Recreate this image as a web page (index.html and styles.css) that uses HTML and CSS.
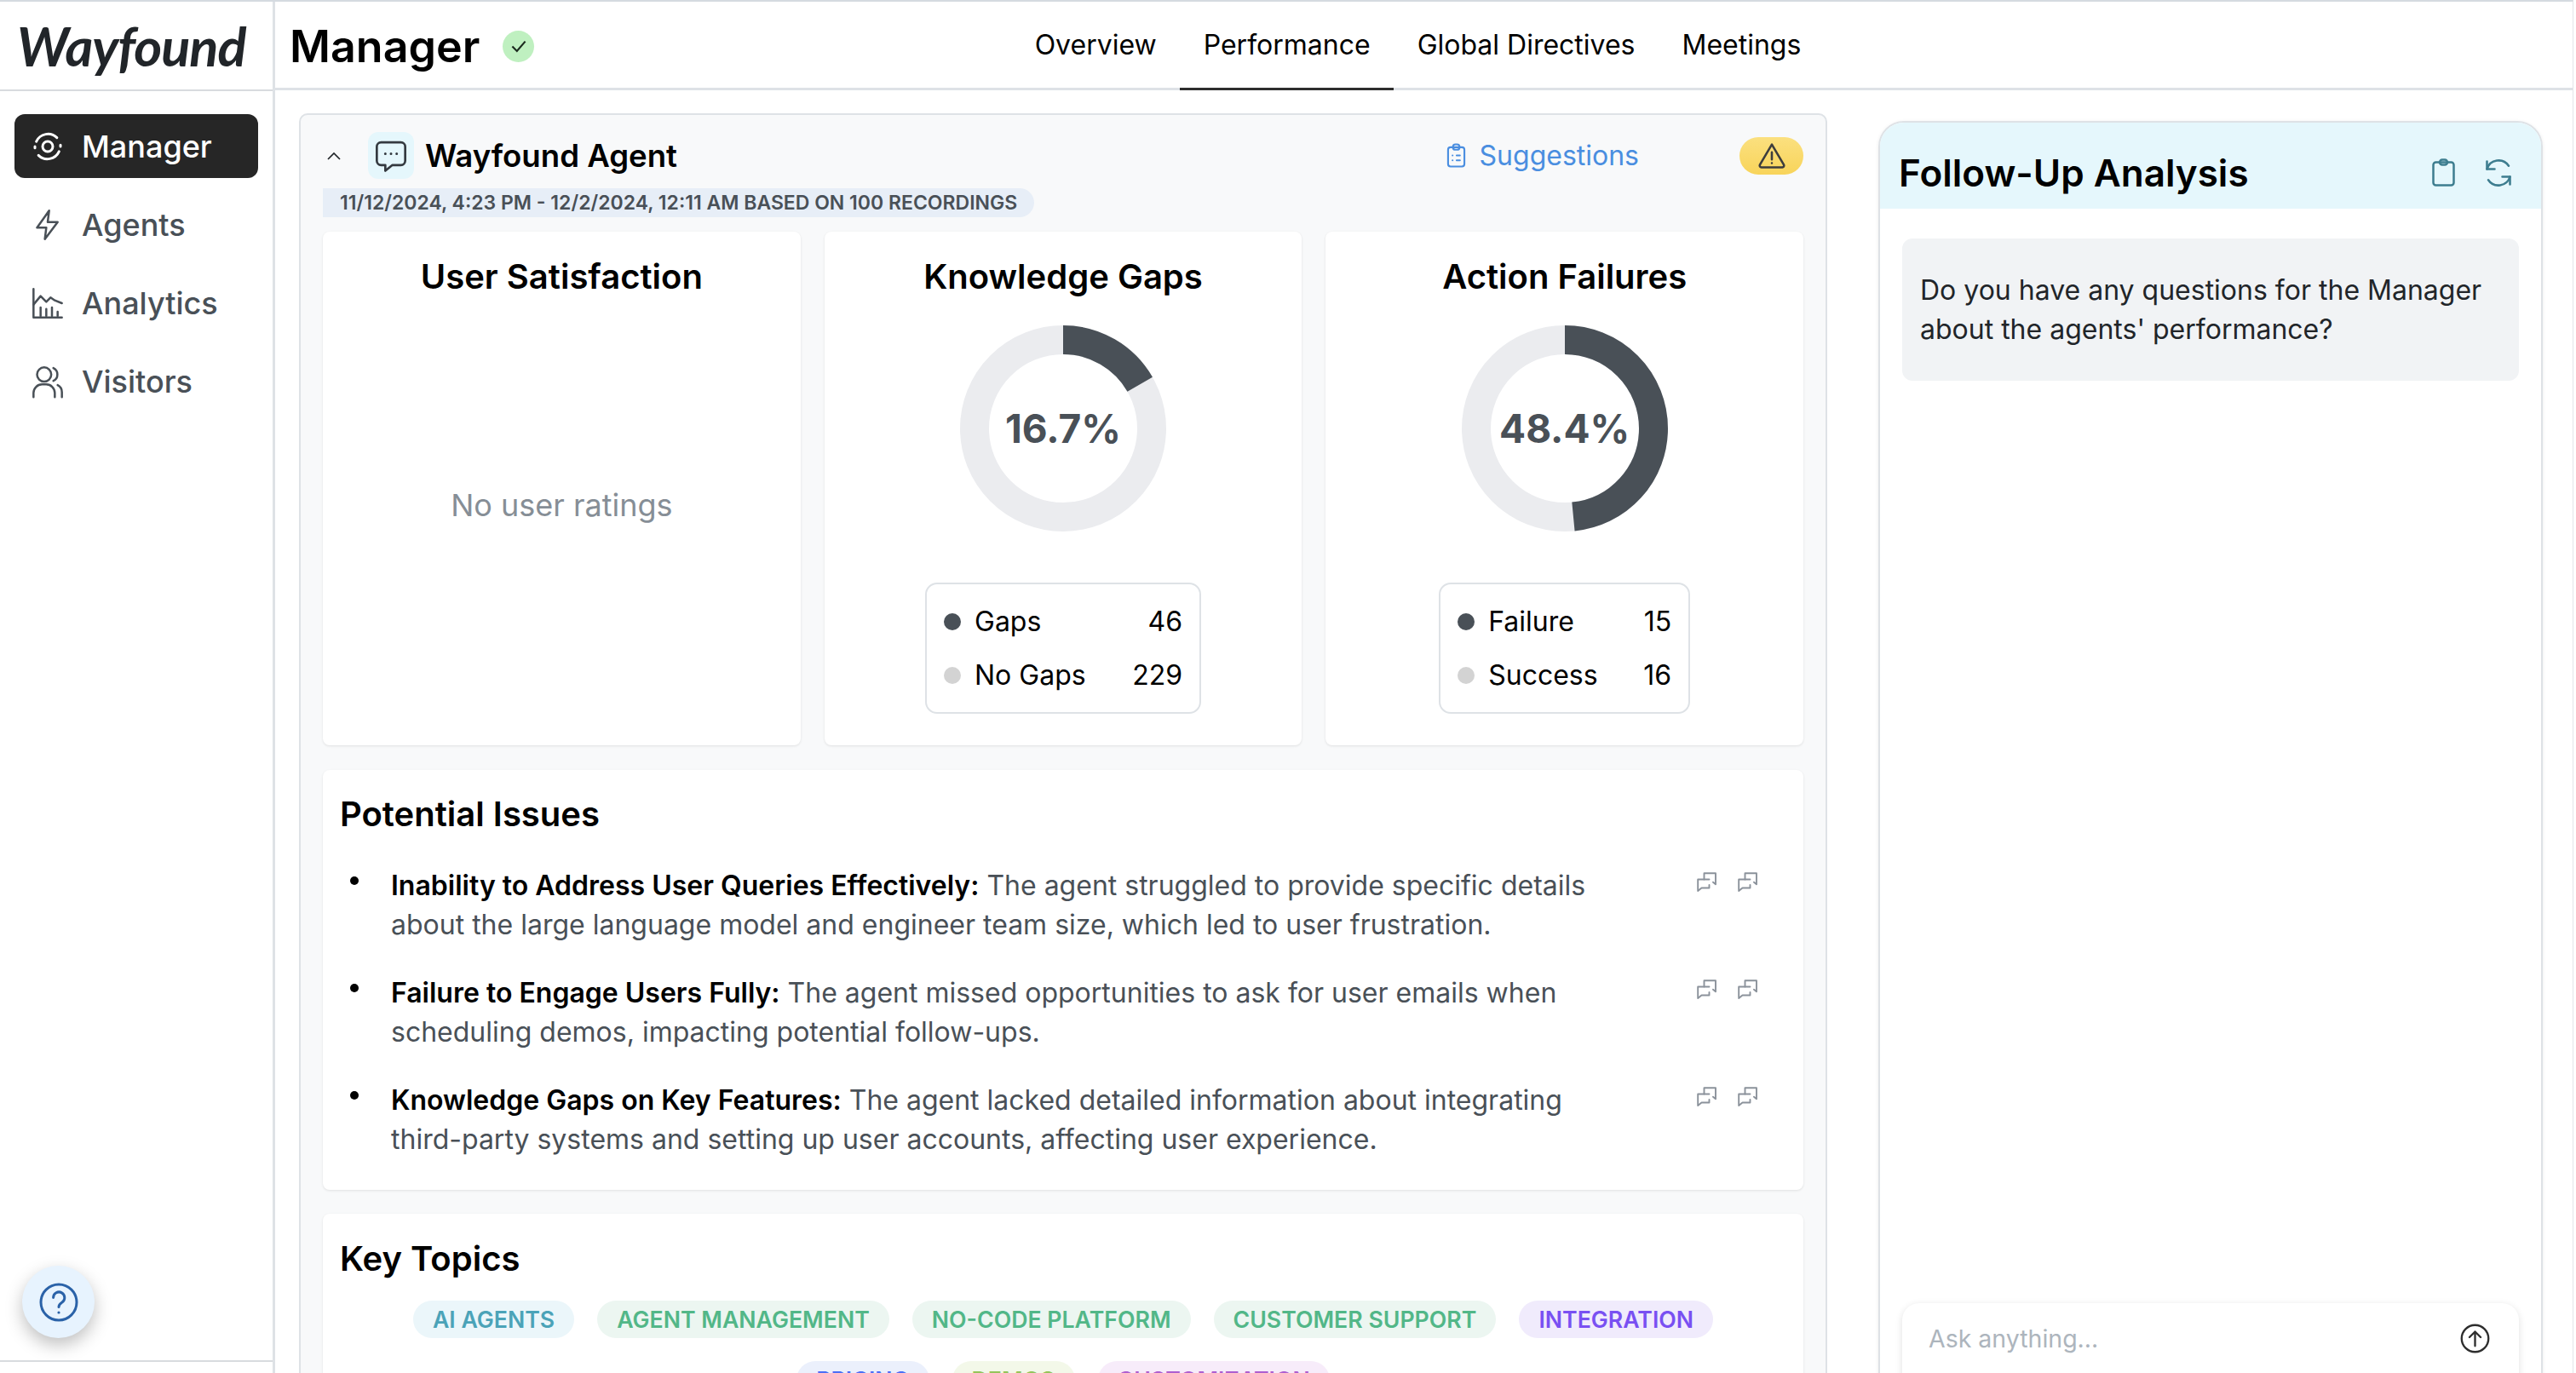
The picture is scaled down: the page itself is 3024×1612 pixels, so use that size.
FILE: index.html
```html
<!DOCTYPE html>
<html lang="en">
<head>
	<meta charset="UTF-8">
	<title>Manager - Wayfound</title>
	<link rel="stylesheet" href="styles.css">
</head>
<body>
	<div class="page">
		<aside class="sidebar">
			<div class="logo"><span class="logo-text">Wayfound</span></div>
			<nav class="side-nav">
				<a class="side-link active">
					<svg class="side-icon" viewBox="0 0 24 24"><circle cx="12" cy="12" r="3.600"/><path d="M4 8.500A9 9 0 0 1 18.500 5.800M20 15.500A9 9 0 0 1 5.500 18.200"/><path d="M3 13v-1M21 11v1"/></svg>
					Manager
				</a>
				<a class="side-link">
					<svg class="side-icon" viewBox="0 0 24 24"><path d="M13 2 4.500 14H11l-1 8 9-12h-7z"/></svg>
					Agents
				</a>
				<a class="side-link">
					<svg class="side-icon" viewBox="0 0 24 24"><path d="M2 2v20h20"/><path d="M2 13l5-6 4 4 3-3 3 2 5 2"/><path d="M7 21v-6M11 21v-5M15 21v-6M19 21v-3"/></svg>
					Analytics
				</a>
				<a class="side-link">
					<svg class="side-icon" viewBox="0 0 24 24"><circle cx="9.500" cy="7" r="5"/><path d="M2 23v-3a6 6 0 0 1 6-6h3a6 6 0 0 1 6 6v3"/><path d="M16 2.500a5 5 0 0 1 0 9M19 14.500a5.500 5.500 0 0 1 3 5V23"/></svg>
					Visitors
				</a>
			</nav>
			<button class="help-btn">
				<svg viewBox="0 0 24 24"><circle cx="12" cy="12" r="10.500"/><path d="M8.800 9.200a3.300 3.300 0 1 1 5 2.900c-1.100.7-1.800 1.300-1.800 2.600"/><circle class="dot" cx="12" cy="18" r=".8"/></svg>
			</button>
			<div class="side-foot"></div>
		</aside>

		<div class="main">
			<header class="topbar">
				<div class="page-title">
					<h1>Manager</h1>
					<span class="status-ok"><svg viewBox="0 0 24 24"><path d="M5 12.500l5 5L19 7"/></svg></span>
				</div>
				<div class="tabs">
					<a class="tab">Overview</a>
					<a class="tab active">Performance</a>
					<a class="tab">Global Directives</a>
					<a class="tab">Meetings</a>
				</div>
			</header>

			<div class="content">
				<section class="agent-panel">
					<div class="agent-head">
						<svg class="chevron" viewBox="0 0 24 24"><path d="M5 16l7-7 7 7"/></svg>
						<span class="agent-icon">
							<svg viewBox="0 0 24 24"><path d="M5 2.500h14a3 3 0 0 1 3 3v10a3 3 0 0 1-3 3h-6l-5 4v-4H5a3 3 0 0 1-3-3v-10a3 3 0 0 1 3-3z"/><path class="dots" d="M8 10.500h.01M12 10.500h.01M16 10.500h.01"/></svg>
						</span>
						<h2 class="agent-name">Wayfound Agent</h2>
						<a class="suggestions">
							<svg viewBox="0 0 24 30"><rect x="2" y="5" width="20" height="23.500" rx="3"/><rect x="8" y="1.500" width="8" height="6.500" rx="3"/><path d="M7.500 15h.01M7.500 21h.01M12.500 15h4M12.500 21h4"/></svg>
							Suggestions
						</a>
						<span class="warn-pill">
							<svg viewBox="0 0 24 24"><path d="M12 2.500 2 19.500a1.500 1.500 0 0 0 1.300 2h17.400a1.500 1.500 0 0 0 1.300-2z"/><path d="M12 9v6M12 18v.01"/></svg>
						</span>
					</div>
					<div class="date-pill">11/12/2024, 4:23 PM - 12/2/2024, 12:11 AM based on 100 recordings</div>

					<div class="stat-row">
						<div class="card stat">
							<h3>User Satisfaction</h3>
							<p class="no-data">No user ratings</p>
						</div>
						<div class="card stat">
							<h3>Knowledge Gaps</h3>
							<div class="donut">
								<svg viewBox="0 0 242 242"><circle class="track" cx="121" cy="121" r="104"/><circle class="value" cx="121" cy="121" r="104" stroke-dasharray="109.100 653.500" transform="rotate(-90 121 121)"/></svg>
								<span class="donut-label">16.7%</span>
							</div>
							<div class="legend legend-gaps">
								<div class="legend-row"><i class="dot-dark"></i><span>Gaps</span><b>46</b></div>
								<div class="legend-row"><i class="dot-light"></i><span>No Gaps</span><b>229</b></div>
							</div>
						</div>
						<div class="card stat">
							<h3>Action Failures</h3>
							<div class="donut">
								<svg viewBox="0 0 242 242"><circle class="track" cx="121" cy="121" r="104"/><circle class="value" cx="121" cy="121" r="104" stroke-dasharray="316.300 653.500" transform="rotate(-90 121 121)"/></svg>
								<span class="donut-label">48.4%</span>
							</div>
							<div class="legend legend-actions">
								<div class="legend-row"><i class="dot-dark"></i><span>Failure</span><b>15</b></div>
								<div class="legend-row"><i class="dot-light"></i><span>Success</span><b>16</b></div>
							</div>
						</div>
					</div>

					<div class="card issues">
						<h3>Potential Issues</h3>
						<ul class="issue-list">
							<li>
								<p><strong>Inability to Address User Queries Effectively:</strong> The agent struggled to provide specific details about the large language model and engineer team size, which led to user frustration.</p>
								<span class="issue-actions">
									<svg viewBox="0 0 23 23"><path d="M8.500 8.500V1.200H22v13l-3-2.500"/><path d="M14.500 8.500H1.200V22l4.300-3.500h9v-3.500"/></svg>
									<svg viewBox="0 0 23 23"><path d="M8.500 8.500V1.200H22v13l-3-2.500"/><path d="M14.500 8.500H1.200V22l4.300-3.500h9v-3.500"/></svg>
								</span>
							</li>
							<li>
								<p><strong>Failure to Engage Users Fully:</strong> The agent missed opportunities to ask for user emails when scheduling demos, impacting potential follow-ups.</p>
								<span class="issue-actions">
									<svg viewBox="0 0 23 23"><path d="M8.500 8.500V1.200H22v13l-3-2.500"/><path d="M14.500 8.500H1.200V22l4.300-3.500h9v-3.500"/></svg>
									<svg viewBox="0 0 23 23"><path d="M8.500 8.500V1.200H22v13l-3-2.500"/><path d="M14.500 8.500H1.200V22l4.300-3.500h9v-3.500"/></svg>
								</span>
							</li>
							<li>
								<p><strong>Knowledge Gaps on Key Features:</strong> The agent lacked detailed information about integrating third-party systems and setting up user accounts, affecting user experience.</p>
								<span class="issue-actions">
									<svg viewBox="0 0 23 23"><path d="M8.500 8.500V1.200H22v13l-3-2.500"/><path d="M14.500 8.500H1.200V22l4.300-3.500h9v-3.500"/></svg>
									<svg viewBox="0 0 23 23"><path d="M8.500 8.500V1.200H22v13l-3-2.500"/><path d="M14.500 8.500H1.200V22l4.300-3.500h9v-3.500"/></svg>
								</span>
							</li>
						</ul>
					</div>

					<div class="card topics">
						<h3>Key Topics</h3>
						<div class="topic-list">
							<span class="topic teal">AI Agents</span>
							<span class="topic green">Agent Management</span>
							<span class="topic green">No-Code Platform</span>
							<span class="topic green">Customer Support</span>
							<span class="topic violet">Integration</span>
							<span class="topic blue">Pricing</span>
							<span class="topic lime">Demos</span>
							<span class="topic pink">Customization</span>
						</div>
					</div>
				</section>

				<section class="followup">
					<div class="followup-head">
						<h2>Follow-Up Analysis</h2>
						<svg class="head-icon clip" viewBox="0 0 27 33"><rect x="1.500" y="4.500" width="24" height="27" rx="3"/><rect x="9" y="1.500" width="9" height="6" rx="3"/></svg>
						<svg class="head-icon refresh" viewBox="0 0 24 24"><path d="M3 9a9.500 9.500 0 0 1 17-2.500M21 15a9.500 9.500 0 0 1-17 2.500"/><path d="M3 3v6h6M21 21v-6h-6"/></svg>
					</div>
					<div class="followup-body">
						<div class="message">Do you have any questions for the Manager about the agents' performance?</div>
						<div class="ask-box">
							<span class="ask-hint">Ask anything...</span>
							<svg class="send" viewBox="0 0 24 24"><circle cx="12" cy="12" r="10.800"/><path d="M12 18V6.500M7.500 11 12 6.500l4.500 4.500"/></svg>
						</div>
					</div>
				</section>
			</div>
		</div>
	</div>
</body>
</html>
```

FILE: styles.css
```css
*{
	margin: 0;
	padding: 0;
	box-sizing: border-box;
}
html,body{
	height: 1612px;
	overflow: hidden;
	background-color: #fff;
}
body{
	font-family: "Inter", "Liberation Sans", sans-serif;
	color: #000;
}
svg{
	fill: none;
	display: block;
}
.page{
	display: flex;
	width: 3021px;
	height: 1612px;
	border-right: 1px solid #e3e5e8;
	border-top: 2px solid #d5dae0;
	overflow: hidden;
}

/* sidebar */
.sidebar{
	width: 323px;
	flex: none;
	display: flex;
	flex-direction: column;
	border-right: 3px solid #dee2e6;
}
.logo{
	height: 105px;
	flex: none;
	border-bottom: 2px solid #d8dbdf;
	padding-left: 20px;
	display: flex;
	align-items: center;
}
.logo-text{
	font-family: "Lato", sans-serif;
	font-style: italic;
	font-weight: 700;
	font-size: 63px;
	letter-spacing: -1px;
	color: #212529;
}
.side-nav{
	display: flex;
	flex-direction: column;
	gap: 17px;
	padding: 27px 17px 0;
}
.side-link{
	height: 75px;
	display: flex;
	align-items: center;
	gap: 20px;
	padding-left: 19px;
	border-radius: 12px;
	font-size: 36px;
	font-weight: 500;
	color: #495057;
}
.side-link.active{
	background-color: #262626;
	color: #fff;
}
.side-icon{
	width: 40px;
	height: 40px;
	stroke: #495057;
	stroke-width: 1.500;
	stroke-linecap: round;
	stroke-linejoin: round;
	flex: none;
}
.active .side-icon{
	stroke: #fff;
	stroke-width: 1.800;
}
.help-btn{
	width: 85px;
	height: 85px;
	margin: auto 0 26px 26px;
	flex: none;
	border: 0;
	border-radius: 50%;
	background-color: #e7f3fe;
	box-shadow: 0 8px 20px rgba(0,0,0,.25);
	display: flex;
	align-items: center;
	justify-content: center;
}
.help-btn svg{
	width: 48px;
	height: 48px;
	stroke: #2a62a8;
	stroke-width: 1.500;
	stroke-linecap: round;
}
.help-btn .dot{
	fill: #2a62a8;
	stroke: none;
}
.side-foot{
	height: 15px;
	flex: none;
	border-top: 2px solid #d8dbdf;
}

/* top bar */
.main{
	flex: 1;
	min-width: 0;
	display: flex;
	flex-direction: column;
}
.topbar{
	height: 104px;
	flex: none;
	display: grid;
	grid-template-columns: 1fr auto 1fr;
	padding-right: 14px;
	border-bottom: 3px solid #dee2e6;
}
.page-title{
	display: flex;
	align-items: center;
	gap: 27px;
	padding-left: 17px;
}
.page-title h1{
	font-size: 52px;
	font-weight: 600;
}
.status-ok{
	width: 37px;
	height: 37px;
	border-radius: 50%;
	background-color: #bff0c0;
	display: flex;
	align-items: center;
	justify-content: center;
}
.status-ok svg{
	width: 26px;
	height: 26px;
	stroke: #1b2a1e;
	stroke-width: 2;
}
.tabs{
	display: flex;
}
.tab{
	height: 104px;
	padding: 0 27.500px 4px;
	display: flex;
	align-items: center;
	font-size: 32px;
	color: #000;
}
.tab.active{
	padding-bottom: 1px;
	border-bottom: 3px solid #2e2e2e;
}

/* page content */
.content{
	flex: 1;
	min-height: 0;
	display: flex;
	gap: 60px;
	padding: 27px 36px 0 28px;
	overflow: hidden;
	align-items: flex-start;
}
.agent-panel{
	width: 1794px;
	flex: none;
	background-color: #f8f9fa;
	border: 2px solid #dee2e6;
	border-radius: 10px;
	padding: 20px 26px 40px;
}
.agent-head{
	display: flex;
	align-items: center;
	height: 55px;
}
.chevron{
	width: 24px;
	height: 24px;
	stroke: #212529;
	stroke-width: 1.700;
	margin-left: 1px;
	margin-right: 28px;
}
.agent-icon{
	width: 54px;
	height: 55px;
	border-radius: 12px;
	background-color: #e5f7fc;
	display: flex;
	align-items: center;
	justify-content: center;
}
.agent-icon svg{
	width: 40px;
	height: 40px;
	stroke: #343a40;
	stroke-width: 1.600;
	stroke-linejoin: round;
}
.agent-icon .dots{
	stroke-linecap: round;
	stroke-width: 1.800;
}
.agent-name{
	font-size: 36.600px;
	font-weight: 600;
	margin-left: 13px;
}
.suggestions{
	margin-left: auto;
	display: flex;
	align-items: center;
	gap: 16px;
	font-size: 32px;
	color: #4a8ee0;
}
.suggestions svg{
	width: 23px;
	height: 29px;
	stroke: #4a8ee0;
	stroke-width: 2.200;
	stroke-linecap: round;
}
.warn-pill{
	width: 75px;
	height: 44px;
	margin-left: 118px;
	border-radius: 22px;
	background: linear-gradient(#fbe07f,#f8d45a);
	display: flex;
	align-items: center;
	justify-content: center;
}
.warn-pill svg{
	width: 34px;
	height: 34px;
	stroke: #3d3d3d;
	stroke-width: 1.800;
	stroke-linejoin: round;
	stroke-linecap: round;
}
.date-pill{
	display: inline-block;
	height: 34px;
	line-height: 34px;
	margin-top: 11px;
	padding: 0 20px;
	background-color: #e7eef7;
	border-radius: 0 17px 17px 0;
	font-size: 23px;
	font-weight: 600;
	text-transform: uppercase;
	color: #495057;
	vertical-align: top;
}
.stat-row{
	display: flex;
	gap: 28px;
	margin-top: 17px;
}
.card{
	background-color: #fff;
	border-radius: 8px;
	box-shadow: 0 1px 3px rgba(0,0,0,.1);
}
.stat{
	flex: 1;
	height: 603px;
	padding-top: 29px;
	display: flex;
	flex-direction: column;
	align-items: center;
}
.stat h3{
	font-size: 40px;
	line-height: 48px;
	font-weight: 600;
}
.no-data{
	margin-top: 222px;
	font-size: 36px;
	color: #868e96;
}
.donut{
	width: 242px;
	height: 242px;
	margin-top: 33px;
	position: relative;
	flex: none;
}
.donut circle{
	stroke-width: 34;
}
.donut .track{
	stroke: #ebecef;
}
.donut .value{
	stroke: #495057;
}
.donut-label{
	position: absolute;
	left: 0;
	right: 0;
	top: 0;
	bottom: 0;
	display: flex;
	align-items: center;
	justify-content: center;
	font-size: 46px;
	font-weight: 700;
	color: #495057;
}
.legend{
	margin-top: 60px;
	height: 154px;
	padding: 12px 20px;
	border: 2px solid #dee2e6;
	border-radius: 14px;
	display: flex;
	flex-direction: column;
	justify-content: center;
	gap: 15px;
}
.legend-gaps{
	width: 324px;
}
.legend-actions{
	width: 295px;
}
.legend-row{
	display: flex;
	align-items: center;
	height: 48px;
	font-size: 32px;
	color: #000;
}
.legend-row i{
	width: 20px;
	height: 20px;
	border-radius: 50%;
	margin-right: 16px;
	flex: none;
}
.dot-dark{
	background-color: #495057;
}
.dot-light{
	background-color: #d3d3d3;
}
.legend-row b{
	margin-left: auto;
	font-weight: 400;
}

/* issues */
.issues{
	margin-top: 29px;
	height: 493px;
	padding: 26px 20px 0;
}
.issues h3,.topics h3{
	font-size: 40px;
	line-height: 52px;
	font-weight: 600;
}
.issue-list{
	list-style: none;
	margin-top: 35px;
	display: flex;
	flex-direction: column;
	gap: 34px;
}
.issue-list li{
	display: flex;
	align-items: flex-start;
}
.issue-list li::before{
	content: "";
	width: 10px;
	height: 10px;
	border-radius: 50%;
	background-color: #000;
	margin: 12px 38px 0 12px;
	flex: none;
}
.issue-list p{
	width: 1460px;
	flex: none;
	font-size: 32px;
	line-height: 46px;
	color: #495057;
}
.issue-list strong{
	font-weight: 600;
	color: #000;
}
.issue-actions{
	display: flex;
	gap: 25px;
	margin-left: 73px;
	margin-top: 7px;
}
.issue-actions svg{
	width: 23px;
	height: 23px;
	stroke: #8b929b;
	stroke-width: 1.900;
	stroke-linejoin: round;
	stroke-linecap: round;
}

/* topics */
.topics{
	margin-top: 28px;
	padding: 27px 20px 30px;
}
.topic-list{
	margin-top: 23px;
	display: flex;
	flex-wrap: wrap;
	justify-content: center;
	gap: 27px;
	padding: 0 10px;
}
.topic{
	height: 44px;
	line-height: 44px;
	padding: 0 23px;
	border-radius: 22px;
	font-size: 26.700px;
	font-weight: 600;
	text-transform: uppercase;
}
.teal{ background-color: #ebf6fa; color: #4ba3b8; }
.green{ background-color: #ecf6f1; color: #52b788; }
.violet{ background-color: #f0ebfc; color: #7950f2; }
.blue{ background-color: #ebf0fc; color: #4c6ef5; }
.lime{ background-color: #f3f8e9; color: #94c45a; }
.pink{ background-color: #f7ecfa; color: #ae5fd0; }

/* follow-up panel */
.followup{
	width: 780px;
	flex: none;
	margin-top: 9px;
	height: 1600px;
	border: 2px solid #dee2e6;
	border-radius: 30px 30px 0 0;
	box-shadow: 0 1px 4px rgba(0,0,0,.08);
	display: flex;
	flex-direction: column;
	overflow: hidden;
}
.followup-head{
	height: 101px;
	flex: none;
	background-color: #e5f7fc;
	display: flex;
	align-items: center;
	padding: 16px 32px 0 22px;
	gap: 33px;
}
.followup-head h2{
	font-size: 44px;
	font-weight: 600;
	margin-right: auto;
}
.head-icon{
	width: 27px;
	height: 33px;
	stroke: #3d7d8f;
	stroke-width: 2.500;
	stroke-linecap: round;
	stroke-linejoin: round;
}
.refresh{
	width: 36px;
	height: 36px;
	stroke-width: 1.700;
}
.followup-body{
	flex: 1;
	padding: 35px 26px 0;
}
.message{
	height: 167px;
	padding: 38px 21px 0;
	background-color: #f1f3f5;
	border-radius: 12px;
	font-size: 32px;
	line-height: 46px;
	color: #212529;
}
.ask-box{
	margin-top: 1083px;
	height: 110px;
	padding: 0 34px 28px 31px;
	border-radius: 20px;
	box-shadow: 0 2px 8px rgba(0,0,0,.12);
	display: flex;
	align-items: center;
	justify-content: space-between;
}
.ask-hint{
	font-size: 28.500px;
	color: #adb5bd;
}
.send{
	width: 35px;
	height: 35px;
	stroke: #2e2e2e;
	stroke-width: 1.600;
	stroke-linecap: round;
	stroke-linejoin: round;
}
```
